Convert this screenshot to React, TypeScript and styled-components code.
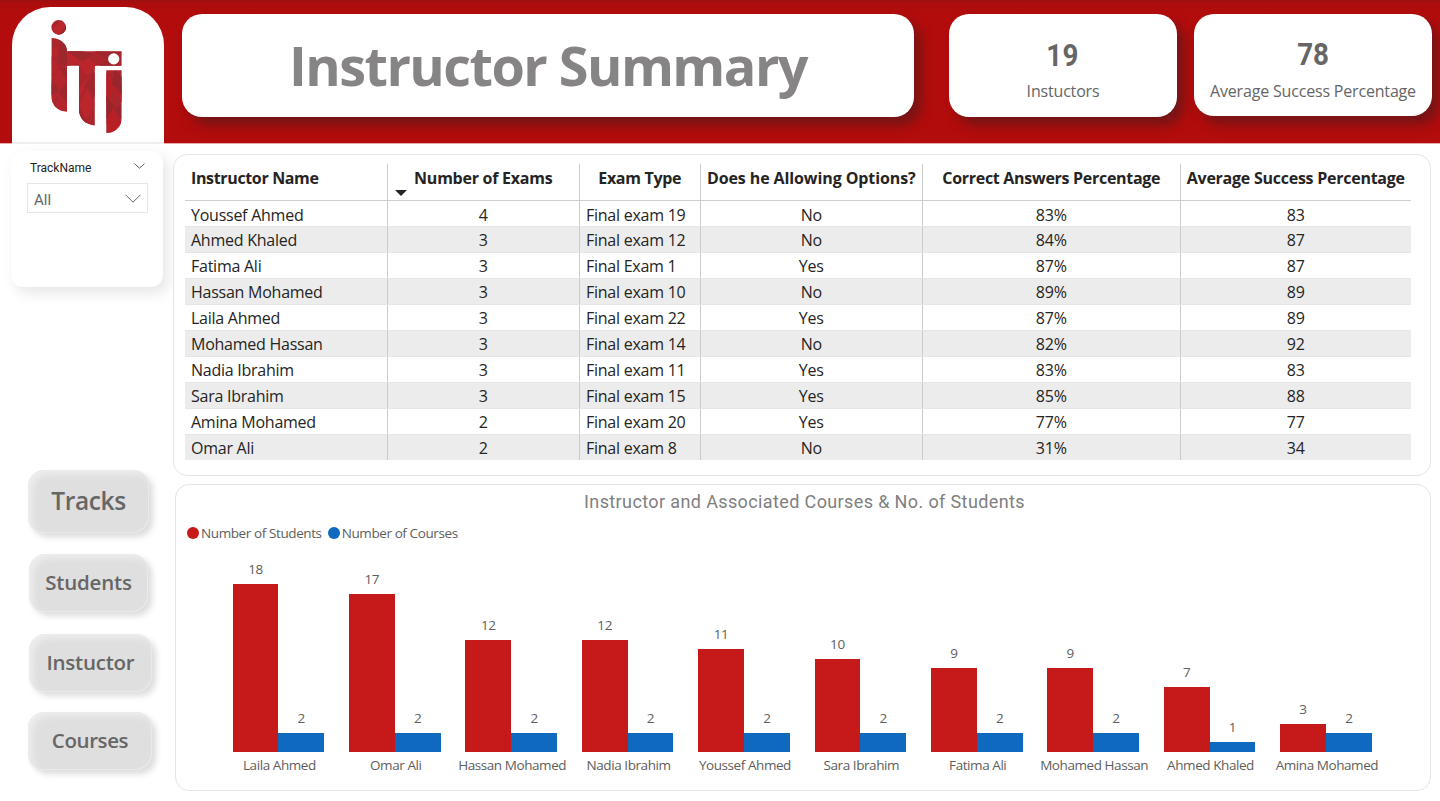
import React from "react";
import styled, { createGlobalStyle } from "styled-components";

const GlobalStyle = createGlobalStyle`
  * { box-sizing: border-box; }
  body { margin: 0; background: #fff; overflow: hidden; }
`;

const UI = `"Open Sans", "Noto Sans", sans-serif`;
const DIN = `Roboto, "Liberation Sans", sans-serif`;

const Page = styled.div`
  width: 1440px;
  height: 801px;
  background: #fff;
  font-family: ${UI};
  display: flex;
  flex-direction: column;
`;

const Header = styled.header`
  flex: none;
  height: 143px;
  padding: 7px 8px 0 12px;
  display: flex;
  align-items: flex-start;
  background: linear-gradient(#9d0f10 0, #ad0d0d 4px, #b30c0c 14px);
  box-shadow: 0 1px 0 #e9a9a9;
`;

const LogoCard = styled.div`
  width: 152px;
  height: 137px;
  border-radius: 38px 38px 0 0;
  background: #fff;
  border-bottom: 2px solid #efefef;
  margin-right: 18px;
  svg { display: block; }
`;

const HeaderCard = styled.div<{ $w: number; $h: number; $gap: number }>`
  width: ${(p) => p.$w}px;
  height: ${(p) => p.$h}px;
  margin: 7px ${(p) => p.$gap}px 0 0;
  border-radius: 20px;
  background: #fff;
  box-shadow: 7px 8px 12px rgba(95, 24, 26, 0.75);
  display: flex;
  flex-direction: column;
  align-items: center;
`;

const Title = styled.h1`
  margin: 11px 0 0;
  font-size: 54px;
  line-height: 80px;
  font-weight: 700;
  letter-spacing: -1.55px;
  color: #868484;
  white-space: nowrap;
`;

const StatValue = styled.div<{ $top: number; $space: number }>`
  margin-top: ${(p) => p.$top}px;
  font: 700 31.5px/36px ${DIN};
  letter-spacing: ${(p) => p.$space}px;
  color: #666;
  transform: scaleX(0.88);
`;

const StatLabel = styled.div<{ $top: number }>`
  margin-top: ${(p) => p.$top}px;
  font-size: 16px;
  line-height: 22px;
  letter-spacing: -0.18px;
  color: #666;
  white-space: nowrap;
`;

const Body = styled.div`
  flex: 1;
  display: flex;
`;

const Sidebar = styled.aside`
  width: 173px;
  padding: 8px 0 0 11px;
  display: flex;
  flex-direction: column;
`;

const Slicer = styled.div`
  width: 152px;
  height: 136px;
  border-radius: 12px;
  background: #fff;
  box-shadow: 5px 6px 14px rgba(0, 0, 0, 0.1);
  padding: 9px 15px 0 16px;
`;

const SlicerHead = styled.div`
  display: flex;
  justify-content: space-between;
  height: 16px;
  padding: 0 3px 0 3px;
  font: 400 12px/16px ${DIN};
  color: #252423;
  svg { margin-top: 3px; }
`;

const SlicerBox = styled.div`
  display: flex;
  justify-content: space-between;
  align-items: center;
  height: 30px;
  margin-top: 7px;
  padding: 3px 6px 0 6px;
  border: 1px solid #e6e6e6;
  font: 400 15px/20px ${DIN};
  color: #666;
  svg { margin-top: -2px; }
`;

const Nav = styled.nav`
  display: flex;
  flex-direction: column;
  margin-top: 183px;
`;

const NavButton = styled.button<{ $w: number; $h: number; $left: number; $gap: number; $size: number; $space: number }>`
  width: ${(p) => p.$w}px;
  height: ${(p) => p.$h}px;
  margin: 0 0 ${(p) => p.$gap}px ${(p) => p.$left}px;
  padding: 0 0 2px;
  border: 0;
  border-radius: 16px;
  background: #dfdfdf;
  box-shadow: 4px 4px 6px rgba(0, 0, 0, 0.14), inset 4px 4px 7px #eeeeee, inset -1px -1px 0 #e9e9e9;
  font: 650 ${(p) => p.$size}px/30px ${UI};
  letter-spacing: ${(p) => p.$space}px;
  color: #666;
`;

const Main = styled.main`
  flex: 1;
  padding: 11px 9px 0 0;
  display: flex;
  flex-direction: column;
  gap: 8px;
`;

const Panel = styled.section<{ $h: number; $left?: number }>`
  flex: none;
  height: ${(p) => p.$h}px;
  margin-left: ${(p) => p.$left || 0}px;
  border: 1px solid #e4e4e4;
  border-radius: 14px;
  background: #fff;
`;

const Table = styled.div`
  margin: 9px 0 0 11px;
  width: 1226px;
`;

const Row = styled.div<{ $kind: "head" | "first" | "plain" | "alt" }>`
  display: grid;
  grid-template-columns: 203px 192px 121px 222px 258px 230px;
  height: ${(p) => (p.$kind === "head" ? 37 : p.$kind === "first" ? 25 : 26)}px;
  background: ${(p) => (p.$kind === "alt" ? "#ececec" : "#fff")};
  border-top: ${(p) => (p.$kind === "plain" || p.$kind === "alt" ? "1px solid #e6e6e6" : "0")};
  border-bottom: ${(p) => (p.$kind === "head" ? "1px solid #cfcfcf" : "0")};
`;

const Cell = styled.div<{ $align: "left" | "center"; $top: number }>`
  position: relative;
  padding: ${(p) => p.$top}px 5px 0 ${(p) => (p.$align === "left" ? 6 : 4.5)}px;
  text-align: ${(p) => p.$align};
  font-size: 16px;
  line-height: 22px;
  letter-spacing: -0.25px;
  color: #252423;
  white-space: nowrap;
  border-right: 1px solid #cbcbcb;
  &:last-child { border-right: 0; }
`;

const HeadCell = styled(Cell)<{ $space: number }>`
  font-weight: 700;
  letter-spacing: ${(p) => p.$space}px;
`;

const SortMark = styled.i`
  position: absolute;
  left: 7px;
  bottom: 4px;
  border: 6px solid transparent;
  border-top-color: #252423;
  border-bottom: 0;
`;

const ChartTitle = styled.h2`
  margin: 5px 0 0 3px;
  text-align: center;
  font: 450 18px/24px ${DIN};
  letter-spacing: 0.38px;
  color: #808080;
`;

const Legend = styled.div`
  display: flex;
  margin: 9px 0 0 11px;
  height: 20px;
`;

const LegendItem = styled.div<{ $color: string }>`
  display: flex;
  align-items: center;
  margin-right: 6px;
  font-size: 13.5px;
  line-height: 20px;
  letter-spacing: -0.4px;
  color: #605e5c;
  white-space: nowrap;
  &::before {
    content: "";
    width: 12px;
    height: 12px;
    margin-right: 2px;
    border-radius: 50%;
    background: ${(p) => p.$color};
  }
`;

const Plot = styled.div`
  display: flex;
  margin: 8px 0 0 44.2px;
`;

const Group = styled.div`
  width: 116.4px;
  display: flex;
  flex-direction: column;
  align-items: center;
`;

const Bars = styled.div`
  height: 200.5px;
  display: flex;
  align-items: flex-end;
`;

const Bar = styled.div<{ $color: string; $value: number }>`
  width: 45.8px;
  display: flex;
  flex-direction: column;
  align-items: center;
  font-size: 13.5px;
  line-height: 20px;
  letter-spacing: -0.4px;
  color: #605e5c;
  &::after {
    content: "";
    width: 100%;
    height: ${(p) => p.$value * 9.28}px;
    margin-top: 5px;
    background: ${(p) => p.$color};
  }
`;

const Category = styled.div`
  margin-top: 3.5px;
  padding-left: 2px;
  font-size: 13.5px;
  line-height: 20px;
  letter-spacing: -0.43px;
  color: #605e5c;
  white-space: nowrap;
`;

const columns: [string, number][] = [
  ["Instructor Name", -0.35],
  ["Number of Exams", -0.25],
  ["Exam Type", -0.3],
  ["Does he Allowing Options?", -0.1],
  ["Correct Answers Percentage", -0.29],
  ["Average Success Percentage", -0.25],
];

const rows = [
  ["Youssef Ahmed", "4", "Final exam 19", "No", "83%", "83"],
  ["Ahmed Khaled", "3", "Final exam 12", "No", "84%", "87"],
  ["Fatima Ali", "3", "Final Exam 1", "Yes", "87%", "87"],
  ["Hassan Mohamed", "3", "Final exam 10", "No", "89%", "89"],
  ["Laila Ahmed", "3", "Final exam 22", "Yes", "87%", "89"],
  ["Mohamed Hassan", "3", "Final exam 14", "No", "82%", "92"],
  ["Nadia Ibrahim", "3", "Final exam 11", "Yes", "83%", "83"],
  ["Sara Ibrahim", "3", "Final exam 15", "Yes", "85%", "88"],
  ["Amina Mohamed", "2", "Final exam 20", "Yes", "77%", "77"],
  ["Omar Ali", "2", "Final exam 8", "No", "31%", "34"],
];

const RED = "#c61a1a";
const BLUE = "#0f6abf";

const chart: [string, number, number][] = [
  ["Laila Ahmed", 18, 2],
  ["Omar Ali", 17, 2],
  ["Hassan Mohamed", 12, 2],
  ["Nadia Ibrahim", 12, 2],
  ["Youssef Ahmed", 11, 2],
  ["Sara Ibrahim", 10, 2],
  ["Fatima Ali", 9, 2],
  ["Mohamed Hassan", 9, 2],
  ["Ahmed Khaled", 7, 1],
  ["Amina Mohamed", 3, 2],
];

const Chevron = ({ w, h }: { w: number; h: number }) => (
  <svg width={w} height={h} viewBox={`0 0 ${w} ${h}`} fill="none" stroke="#666" strokeWidth="1">
    <path d={`M0.5 0.7 L${w / 2} ${h - 0.8} L${w - 0.5} 0.7`} />
  </svg>
);

const Logo = () => (
  <svg width="152" height="134" viewBox="12 7 152 134">
    <defs>
      <clipPath id="mark">
        <circle cx="58.7" cy="27.4" r="7.3" />
        <path d="M51.6 38C60 38 67 43.5 67 51.2V111.6C58 111.6 51.6 105 51.6 97Z" />
        <path d="M67 51.2H121.6V65.8H94.8V125.4C86 125.4 79 118 79 110V65.8H67Z" />
        <path d="M106.3 70.2H121.6V118C121.6 127 115 133 106.3 133Z" />
      </clipPath>
    </defs>
    <g clipPath="url(#mark)">
      <rect x="50" y="18" width="74" height="118" fill="#ab252c" />
      <path d="M62 20L52 29L58 36L67 30Z" fill="#bb272d" />
      <path d="M59 35L67 24V35Z" fill="#9c272d" />
      <path d="M58 44L67 55L60 62L52 52ZM51 56L59 67L51 78ZM59 68L66 80L59 92L52 80ZM51 83L60 94L51 104ZM60 94L67 104V112L53 108Z" fill="#b5262c" />
      <path d="M60 40L67 46V66L58 62ZM67 68V79L60 68ZM51 77L59 91L51 95ZM67 82V102L60 93Z" fill="#9c272d" />
      <path d="M67 52L84 63L67 66ZM78 66L88 56L97 66L88 76ZM88 76L79 88V100ZM87 88L95 104L86 120L79 106Z" fill="#bb262c" />
      <path d="M67 51H83L94 55L83 61ZM94 51L122 52L108 58ZM95 72V98L87 86ZM79 110L87 122L84 126L78 122ZM99 66L109 60L122 66Z" fill="#9f262c" />
      <path d="M106 72L115 86L106 103ZM114 88L122 103V84ZM112 108L122 124L110 134L106 122Z" fill="#b92026" />
      <path d="M115 70L122 77V94L112 84ZM106 96L114 106L106 120ZM121 104V118L114 110Z" fill="#98252c" />
    </g>
    <circle cx="113.7" cy="58.9" r="5.6" fill="#fff" />
  </svg>
);

export default function App() {
  return (
    <Page>
      <GlobalStyle />
      <Header>
        <LogoCard><Logo /></LogoCard>
        <HeaderCard $w={732} $h={102.5} $gap={35}>
          <Title>Instructor Summary</Title>
        </HeaderCard>
        <HeaderCard $w={228} $h={102.5} $gap={17}>
          <StatValue $top={24} $space={0.5}>19</StatValue>
          <StatLabel $top={6}>Instuctors</StatLabel>
        </HeaderCard>
        <HeaderCard $w={238} $h={101.5} $gap={0}>
          <StatValue $top={23} $space={0}>78</StatValue>
          <StatLabel $top={7}>Average Success Percentage</StatLabel>
        </HeaderCard>
      </Header>
      <Body>
        <Sidebar>
          <Slicer>
            <SlicerHead>TrackName <Chevron w={11} h={6} /></SlicerHead>
            <SlicerBox>All <Chevron w={16} h={9} /></SlicerBox>
          </Slicer>
          <Nav>
            <NavButton $w={121} $h={63} $left={17} $gap={21} $size={24.5} $space={-0.35}>Tracks</NavButton>
            <NavButton $w={119} $h={58} $left={18} $gap={22} $size={20.5} $space={-0.2}>Students</NavButton>
            <NavButton $w={123} $h={58} $left={18} $gap={20} $size={20.5} $space={-0.25}>Instuctor</NavButton>
            <NavButton $w={124} $h={58} $left={17} $gap={0} $size={20.5} $space={-0.4}>Courses</NavButton>
          </Nav>
        </Sidebar>
        <Main>
          <Panel $h={322}>
            <Table>
              <Row $kind="head">
                {columns.map(([label, space], i) => (
                  <HeadCell key={label} $align={i ? "center" : "left"} $top={3} $space={space}>
                    {label}
                    {i === 1 && <SortMark />}
                  </HeadCell>
                ))}
              </Row>
              {rows.map((r, n) => (
                <Row key={r[0]} $kind={n === 0 ? "first" : n % 2 ? "alt" : "plain"}>
                  {r.map((v, i) => (
                    <Cell key={i} $align={i === 0 || i === 2 ? "left" : "center"} $top={n === 0 ? 3 : 2}>{v}</Cell>
                  ))}
                </Row>
              ))}
            </Table>
          </Panel>
          <Panel $h={307} $left={2}>
            <ChartTitle>Instructor and Associated Courses &amp; No. of Students</ChartTitle>
            <Legend>
              <LegendItem $color={RED}>Number of Students</LegendItem>
              <LegendItem $color={BLUE}>Number of Courses</LegendItem>
            </Legend>
            <Plot>
              {chart.map(([name, students, courses]) => (
                <Group key={name}>
                  <Bars>
                    <Bar $color={RED} $value={students}>{students}</Bar>
                    <Bar $color={BLUE} $value={courses}>{courses}</Bar>
                  </Bars>
                  <Category>{name}</Category>
                </Group>
              ))}
            </Plot>
          </Panel>
        </Main>
      </Body>
    </Page>
  );
}
